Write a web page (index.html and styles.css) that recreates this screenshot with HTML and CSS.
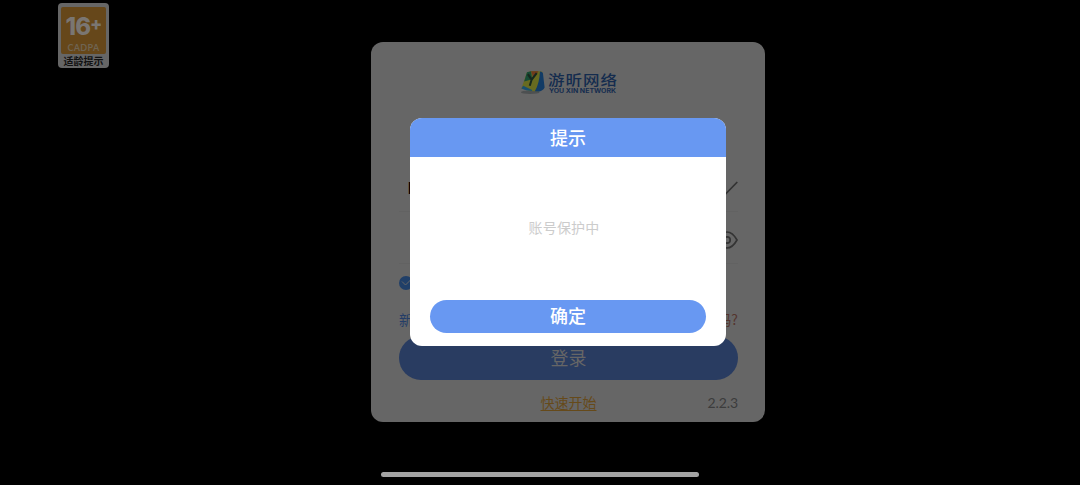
FILE: index.html
```html
<!DOCTYPE html>
<html lang="zh-CN">
<head>
<meta charset="utf-8">
<title>登录</title>
<link rel="stylesheet" href="styles.css">
</head>
<body>
<div class="screen">
  <aside class="rating">
    <div class="rating-panel">
      <div class="rating-age">16<sup class="rating-plus">+</sup></div>
      <div class="rating-org">CADPA</div>
    </div>
    <div class="rating-label">适龄提示</div>
  </aside>

  <main class="card">
    <div class="logo">
      <svg class="logo-mark" width="26" height="28" viewBox="1 0 28 28">
        <ellipse cx="12" cy="25" rx="10" ry="1.800" fill="#4d5051"/>
        <path d="M8.500 3.500Q15 1.500 24 2.800Q25.500 3 25.300 5L21.500 24Q11 24.500 2.500 21Z" fill="#686b20"/>
        <path d="M8.500 3.500L13 2.500 14 11 5.500 13.500Z" fill="#174b35"/>
        <path d="M13 2.400L21 2.500 15.500 10Z" fill="#713a1c"/>
        <path d="M22.500 2.600Q25.300 2.600 25.700 4.500L27.500 20Q26 23.500 21.500 24.200L17 24Q22 15 22.500 2.600Z" fill="#123b65"/>
        <path d="M4.500 18L14 22.500 14 23.800Q7 23.200 2.500 21Z" fill="#194f70"/>
        <path d="M9.500 5.500L13.500 11.500 19 4.500M13.500 11.500L11.500 18" fill="none" stroke="#17281e" stroke-width="2.200"/>
      </svg>
      <svg width="70" height="28" viewBox="0 0 70 28">
        <text class="logo-cn" transform="scale(1 .85)" x="0" y="20" textLength="69">游昕网络</text>
        <text class="logo-en" transform="scale(1 .9)" x="1" y="27.800" textLength="67" lengthAdjust="spacingAndGlyphs">YOU XIN NETWORK</text>
      </svg>
    </div>

    <div class="field account">
      <span class="account-name">L</span>
      <svg width="24" height="14" viewBox="0 0 24 14"><path d="M1 1L12 12.500 23.300 1" fill="none" stroke="#333" stroke-width="1.700"/></svg>
    </div>
    <div class="field password">
      <svg width="22" height="18" viewBox="0 0 22 18" fill="none" stroke="#343434" stroke-width="1.700"><path d="M1 9Q5.500 1 11 1T21 9Q16.500 17 11 17T1 9Z"/><circle cx="11" cy="9" r="3.200"/></svg>
    </div>
    <div class="agree">
      <svg width="14" height="14" viewBox="0 0 14 14"><circle cx="7" cy="7" r="7" fill="#203f68"/><path d="M3 5.500L6.500 9 11.500 4" fill="none" stroke="#666" stroke-width="1"/></svg>
    </div>
    <div class="links"><span class="register">新用户注册</span><span class="forgot">忘记密码?</span></div>
    <div class="login">登录</div>
    <div class="foot"><span></span><span class="quick">快速开始</span><span class="version">2.2.3</span></div>
  </main>

  <div class="home-bar"></div>

  <section class="dialog">
    <header class="dialog-title">提示</header>
    <p class="dialog-text">账号保护中</p>
    <button class="dialog-ok">确定</button>
  </section>
</div>
</body>
</html>
```
FILE: styles.css
```css
* { box-sizing: border-box; }
body {
  margin: 0;
  background: #000;
  font-family: "Noto Sans CJK SC", sans-serif;
}
.screen {
  position: relative;
  width: 1080px;
  height: 485px;
  overflow: hidden;
  display: grid;
  grid-template-columns: 371px 394px 1fr;
  grid-template-rows: 422px 1fr;
}
.rating {
  margin: 3px 0 0 58px;
  width: 51px;
  height: 65px;
  padding: 4px 3px 0;
  border-radius: 4px;
  background: #666;
}
.rating-panel {
  height: 47px;
  border-radius: 2px;
  background: #66471a;
  color: #7a7672;
  text-align: center;
}
.rating-age {
  height: 34px;
  padding-top: 4px;
  font: 800 24px/32px Inter, sans-serif;
  letter-spacing: -1px;
  white-space: nowrap;
}
.rating-plus {
  font-size: 18px;
  line-height: 0;
  vertical-align: 5px;
}
.rating-org {
  font: 700 9px/13px Lato, sans-serif;
  letter-spacing: .3px;
  color: #6f6452;
}
.rating-label {
  padding-top: 1px;
  text-align: center;
  font-size: 10px;
  line-height: 12px;
  font-weight: 700;
  color: #111;
  white-space: nowrap;
}
.card {
  display: flex;
  flex-direction: column;
  margin-top: 41.500px;
  height: 380.500px;
  padding: 26.500px 27px 0 28px;
  border-radius: 12px;
  background: #666;
}
.logo {
  display: flex;
  align-self: center;
  gap: 2px;
  height: 28px;
}
.logo-cn {
  font: 500 16.500px "Noto Sans CJK SC", sans-serif;
  fill: #142c4e;
}
.logo-en {
  font: 700 6.200px Inter, sans-serif;
  fill: #142c4e;
}
.field {
  display: flex;
  align-items: center;
  justify-content: space-between;
  border-bottom: 1px solid #626262;
}
.account { height: 48px; margin-top: 68px; }
.account-name {
  margin-left: 8.500px;
  font: 17px Roboto, sans-serif;
  color: #000;
}
.password { height: 52px; justify-content: flex-end; padding-top: 4px; }
.agree { height: 14px; margin-top: 12px; display: flex; }
.links {
  display: flex;
  justify-content: space-between;
  height: 20px;
  margin-top: 19px;
  font-size: 14px;
  line-height: 20px;
}
.register { color: #243d67; }
.forgot { color: #55352e; }
.login {
  height: 44px;
  margin-top: 7px;
  border-radius: 22px;
  background: #293c61;
  color: #666;
  font-size: 18px;
  line-height: 42px;
  text-align: center;
}
.foot {
  display: grid;
  grid-template-columns: 1fr auto 1fr;
  margin-top: 11px;
  font-size: 14px;
  line-height: 22px;
}
.quick { color: #664a1a; text-decoration: underline; text-underline-offset: 2px; text-decoration-thickness: 1px; }
.version { padding-top: 1px; color: #3c3c3c; text-align: right; font-family: Lato, sans-serif; font-weight: 400; letter-spacing: -.1px; }
.home-bar {
  grid-row: 2;
  grid-column: 1 / -1;
  justify-self: center;
  width: 318px;
  height: 5px;
  margin-top: 50px;
  border-radius: 3px;
  background: #a3a3a3;
}
.dialog {
  position: absolute;
  left: 410px;
  top: 118px;
  width: 316px;
  height: 228px;
  border-radius: 12px;
  overflow: hidden;
  background: #fff;
  display: flex;
  flex-direction: column;
}
.dialog-title {
  height: 39.400px;
  background: #6898f2;
  color: #fff;
  font-size: 18px;
  line-height: 39px;
  font-weight: 500;
  text-align: center;
}
.dialog-text {
  flex: 1;
  margin: 0;
  padding: 0 8px 4px 0;
  display: flex;
  align-items: center;
  justify-content: center;
  color: #ccc;
  font-size: 14px;
  letter-spacing: .200px;
}
.dialog-ok {
  height: 33px;
  margin: 0 20px 13px;
  padding: 0 0 3px;
  border: 0;
  border-radius: 17px;
  background: #6898f2;
  color: #fff;
  font: 500 18px/30px "Noto Sans CJK SC", sans-serif;
}
```
